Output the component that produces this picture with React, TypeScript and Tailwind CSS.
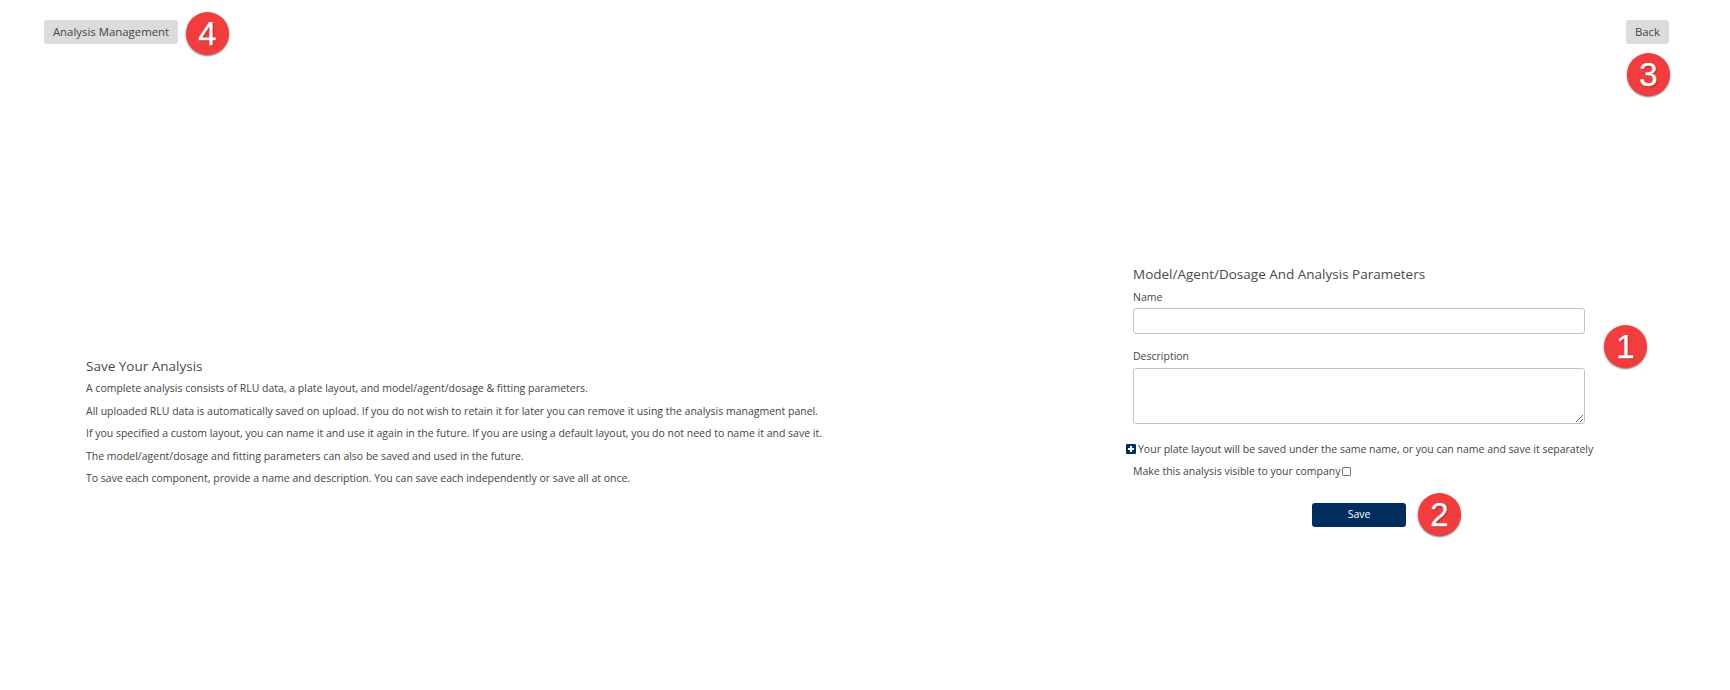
const font = 'font-["Open_Sans",sans-serif]'

function Badge({ n, className }: { n: number; className: string }) {
  return (
    <div className={`absolute flex h-[43px] w-[43px] items-center justify-center rounded-full bg-[#f23d3f] font-["Liberation_Sans",sans-serif] text-[33px] leading-none text-white shadow-[0_1px_2px_rgba(0,0,0,0.55)] [-webkit-text-stroke:0.25px_white] [text-shadow:1px_1px_1px_rgba(0,0,0,0.35)] ${className}`}>
      {n}
    </div>
  )
}

const lines = [
  'A complete analysis consists of RLU data, a plate layout, and model/agent/dosage & fitting parameters.',
  'All uploaded RLU data is automatically saved on upload. If you do not wish to retain it for later you can remove it using the analysis managment panel.',
  'If you specified a custom layout, you can name it and use it again in the future. If you are using a default layout, you do not need to name it and save it.',
  'The model/agent/dosage and fitting parameters can also be saved and used in the future.',
  'To save each component, provide a name and description. You can save each independently or save all at once.',
]

export default function App() {
  return (
    <div className={`relative h-[690px] overflow-hidden bg-white text-[#444] ${font}`}>
      {/* Top buttons */}
      <div className="flex items-start justify-between pl-[44px] pr-[61px] pt-[20px]">
        <button className="h-[24px] w-[134px] rounded-[3px] bg-[#dcdcdc] pb-[1px] text-[11.4px] text-[#444]">Analysis Management</button>
        <button className="h-[24px] w-[43px] rounded-[3px] bg-[#dcdcdc] pb-[1px] text-[11.4px] text-[#444]">Back</button>
      </div>

      <div className="flex items-start">
        {/* Intro text */}
        <div className="ml-[86px] mt-[312px] w-[1047px]">
          <h2 className="text-[13.5px] font-normal leading-[20px] text-[#4a4a4a]">Save Your Analysis</h2>
          <div className="mt-[1px] text-[10.5px]">
            {lines.map(l => (
              <p key={l} className="h-[22.6px] leading-[22.6px]">{l}</p>
            ))}
          </div>
        </div>

        {/* Save form */}
        <div className="mt-[220px] w-[452px]">
          <h2 className="text-[13.5px] font-normal leading-[20px] text-[#4a4a4a]">Model/Agent/Dosage And Analysis Parameters</h2>
          <label className="mt-[6px] block text-[10.5px] leading-[14px]">Name</label>
          <input type="text" className="mt-[4px] block h-[26px] w-full rounded-[3px] border border-[#c4c4c4] bg-white" />
          <label className="mt-[15px] block text-[10.5px] leading-[14px]">Description</label>
          <textarea className="mt-[5px] block h-[56px] w-full rounded-[3px] border border-[#c4c4c4] bg-white" />
          <div className="-ml-[7px] mt-[18px] flex w-[520px] items-center text-[10.5px] leading-[14px]">
            <svg width="10" height="10" viewBox="0 0 10 10" className="mr-[2px] shrink-0">
              <rect width="10" height="10" rx="1" fill="#002d5e" />
              <path d="M5 2v6M2 5h6" stroke="#fff" strokeWidth="2" />
            </svg>
            Your plate layout will be saved under the same name, or you can name and save it separately
          </div>
          <label className="mt-[8px] flex items-center text-[10.5px] leading-[14px]">
            Make this analysis visible to your company
            <input type="checkbox" className="ml-[2px] h-[9px] w-[9px] appearance-none rounded-[1px] border border-[#767676] bg-white" />
          </label>
          <div className="mt-[25px] flex justify-center">
            <button className="h-[24px] w-[94px] rounded-[3px] bg-[#002d5e] text-[10.5px] font-medium text-white">Save</button>
          </div>
        </div>
      </div>

      <Badge n={4} className="left-[186px] top-[12px]" />
      <Badge n={3} className="left-[1627px] top-[53px]" />
      <Badge n={1} className="left-[1604px] top-[325px]" />
      <Badge n={2} className="left-[1418px] top-[493px]" />
    </div>
  )
}
